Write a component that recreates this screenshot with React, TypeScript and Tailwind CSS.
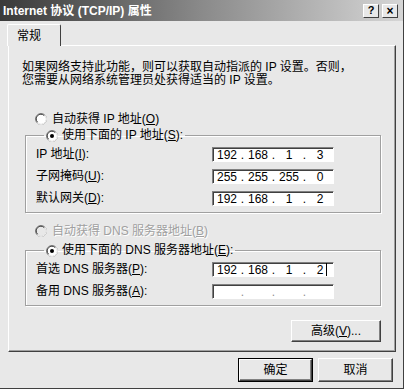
import React from 'react';

const FONT = "font-['Liberation_Sans','Noto_Sans_CJK_SC',sans-serif]";

const Radio: React.FC<{ checked?: boolean; disabled?: boolean }> = ({ checked, disabled }) => (
  <svg width="12" height="12" viewBox="0 0 12 12" className="shrink-0">
    <circle cx="6" cy="6" r="5.5" fill={disabled ? '#e8e8e8' : '#ffffff'} stroke="#808080" strokeWidth="1" />
    <path d="M2.2 9.8 A5 5 0 0 0 9.8 2.2" fill="none" stroke="#ffffff" strokeWidth="1" />
    <path d="M2.6 9.2 A4.4 4.4 0 0 1 9.2 2.6" fill="none" stroke="#404040" strokeWidth="1" />
    {checked && <circle cx="6" cy="6" r="2" fill="#000000" />}
  </svg>
);

const IpField: React.FC<{ parts: string[]; caret?: boolean }> = ({ parts, caret }) => (
  <div className="w-[122px] h-[15px] bg-white border border-t-[#808080] border-l-[#808080] border-r-white border-b-white shadow-[inset_1px_1px_0_#404040] flex items-center pl-[2px] text-[12px] leading-none">
    {parts.map((p, i) => (
      <React.Fragment key={i}>
        <span className="w-[24px] text-center relative">
          {p}
          {caret && i === 3 && <span className="absolute right-[5px] top-[-1px] w-px h-[13px] bg-black" />}
        </span>
        {i < 3 && <span className={`w-[7px] text-center ${p ? 'text-black' : 'text-[#909090]'}`}>.</span>}
      </React.Fragment>
    ))}
  </div>
);

const Row: React.FC<{ label: React.ReactNode; parts: string[]; caret?: boolean }> = ({ label, parts, caret }) => (
  <div className="grid grid-cols-[176px_122px] items-center h-[15px]">
    <span className="text-[12px] leading-[13px]">{label}</span>
    <IpField parts={parts} caret={caret} />
  </div>
);

const Btn: React.FC<{ children: React.ReactNode; w: string; def?: boolean }> = ({ children, w, def }) => (
  <div className={`${w} h-[24px] ${def ? 'border border-black' : ''}`}>
    <div className="w-full h-full bg-[#e8e8e8] border border-l-white border-t-white border-r-[#404040] border-b-[#404040] shadow-[inset_-1px_-1px_0_#808080] flex items-center justify-center text-[12px]">
      {children}
    </div>
  </div>
);

export default function App() {
  return (
    <div className={`${FONT} w-[404px] h-[389px] bg-[#e8e8e8] text-black flex flex-col border-r border-b border-r-[#404040] border-b-[#404040] overflow-hidden`}>
      {/* title bar */}
      <div className="h-[21px] shrink-0 flex items-center pl-[3px] pr-[5px] bg-linear-to-r from-[#3a3a3a] via-[#8a8a8a] to-[#d6d6d6]">
        <span className="text-white font-bold text-[12px]">Internet 协议 (TCP/IP) 属性</span>
        <div className="ml-auto flex gap-[3px]">
          <div className="w-[16px] h-[14px] bg-[#e8e8e8] border border-l-white border-t-white border-r-[#404040] border-b-[#404040] flex items-center justify-center text-[11px] font-bold leading-none">?</div>
          <div className="w-[16px] h-[14px] bg-[#e8e8e8] border border-l-white border-t-white border-r-[#404040] border-b-[#404040] flex items-center justify-center text-[12px] font-bold leading-none">×</div>
        </div>
      </div>

      {/* tab strip */}
      <div className="mt-[3px] pl-[7px] flex">
        <div className="relative z-10 w-[54px] h-[22px] -mb-px bg-[#e8e8e8] border-l border-t border-white border-r border-r-[#404040] rounded-t-[2px] flex items-center pl-[9px] text-[12px]">
          常规
        </div>
      </div>

      {/* panel */}
      <div className="ml-[8px] w-[388px] h-[307px] shrink-0 border border-l-white border-t-white border-r-[#404040] border-b-[#404040] shadow-[inset_-1px_-1px_0_#a0a0a0] flex flex-col">
        <p className="mt-[15px] pl-[13px] text-[12px] leading-[13px]">
          如果网络支持此功能，则可以获取自动指派的 IP 设置。否则，<br />
          您需要从网络系统管理员处获得适当的 IP 设置。
        </p>

        <div className="mt-[25px] pl-[26px] h-[13px] flex items-center gap-[5px] text-[12px]">
          <Radio />
          <span>自动获得 IP 地址(<u>O</u>)</span>
        </div>

        <fieldset className="mt-[4px] ml-[16px] w-[356px] border border-[#a0a0a0] shadow-[1px_1px_0_#fff,inset_1px_1px_0_#fff] pl-[10px] pt-[5px] pb-[6px] flex flex-col gap-[7px]">
          <legend className="ml-[8px] px-[2px] h-[13px] flex items-center gap-[4px] text-[12px] leading-[13px]">
            <Radio checked />
            <span>使用下面的 IP 地址(<u>S</u>):</span>
          </legend>
          <Row label={<>IP 地址(<u>I</u>):</>} parts={['192', '168', '1', '3']} />
          <Row label={<>子网掩码(<u>U</u>):</>} parts={['255', '255', '255', '0']} />
          <Row label={<>默认网关(<u>D</u>):</>} parts={['192', '168', '1', '2']} />
        </fieldset>

        <div className="mt-[11px] pl-[26px] h-[13px] flex items-center gap-[5px] text-[12px] text-[#a0a0a0] [text-shadow:1px_1px_0_#fff]">
          <Radio disabled />
          <span>自动获得 DNS 服务器地址(<u>B</u>)</span>
        </div>

        <fieldset className="mt-[7px] ml-[16px] w-[356px] border border-[#a0a0a0] shadow-[1px_1px_0_#fff,inset_1px_1px_0_#fff] pl-[10px] pt-[5px] pb-[6px] flex flex-col gap-[7px]">
          <legend className="ml-[8px] px-[2px] h-[13px] flex items-center gap-[4px] text-[12px] leading-[13px]">
            <Radio checked />
            <span>使用下面的 DNS 服务器地址(<u>E</u>):</span>
          </legend>
          <Row label={<>首选 DNS 服务器(<u>P</u>):</>} parts={['192', '168', '1', '2']} caret />
          <Row label={<>备用 DNS 服务器(<u>A</u>):</>} parts={['', '', '', '']} />
        </fieldset>

        <div className="mt-[14px] pr-[14px] flex justify-end">
          <Btn w="w-[90px] !h-[22px]">
            <span>高级(<u>V</u>)...</span>
          </Btn>
        </div>
      </div>

      {/* dialog buttons */}
      <div className="mt-[6px] pr-[10px] flex justify-end gap-[5px]">
        <Btn w="w-[75px]" def>确定</Btn>
        <Btn w="w-[75px]">取消</Btn>
      </div>
    </div>
  );
}
